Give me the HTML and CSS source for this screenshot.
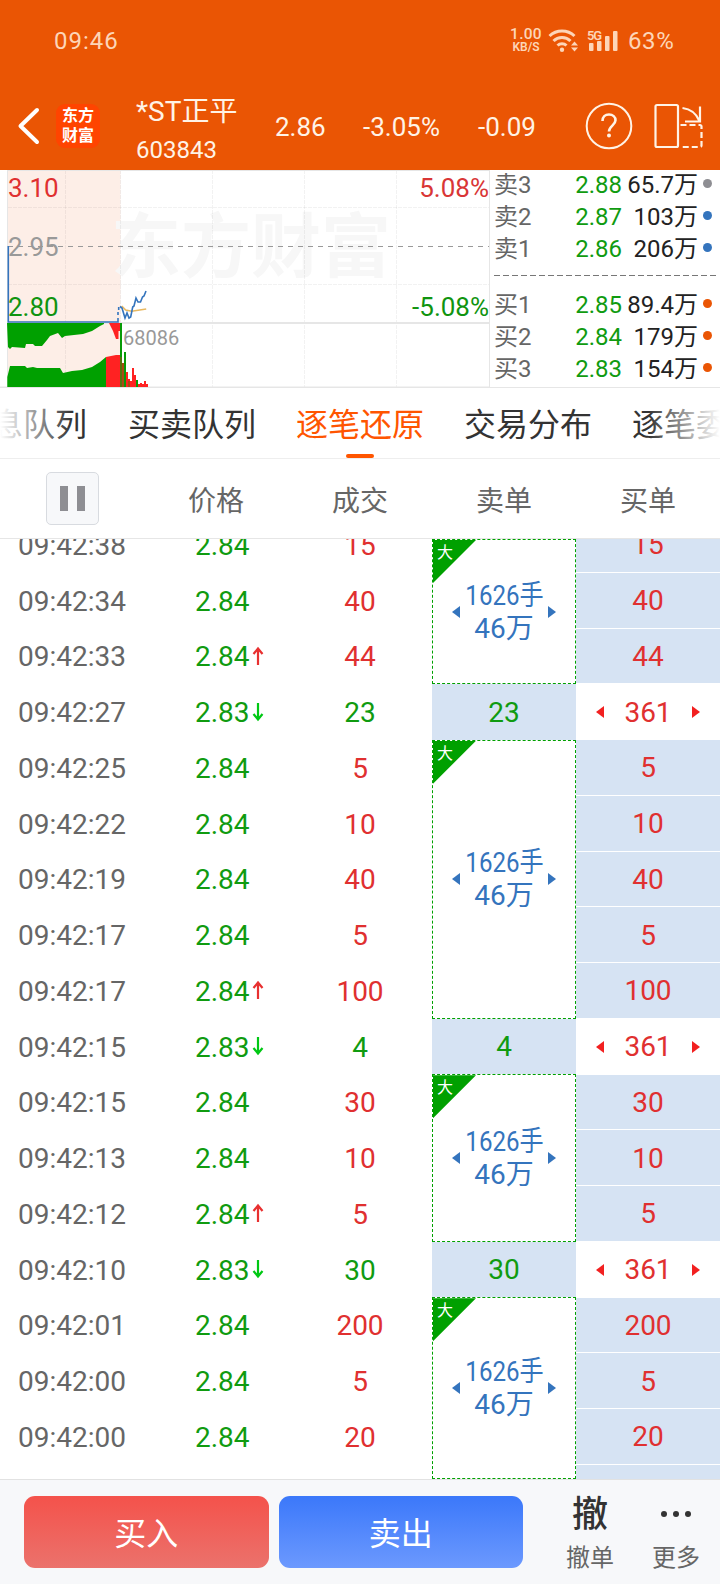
FILE: index.html
```
<!DOCTYPE html>
<html lang="zh-CN">
<head>
  <meta charset="UTF-8">
  <title>*ST正平 603843</title>
  <link rel="stylesheet" href="styles.css">
</head>
<body>
  <header class="top">
    <div class="statusbar">
      <span class="clock">09:46</span>
      <div class="speed"><b>1.00</b><span>KB/S</span></div>
      <svg class="wifi" width="32" height="26" viewBox="0 0 32 26" fill="none" stroke="#fdd5b8" stroke-width="3">
        <path d="M1.500 8a18 18 0 0 1 25 0M5.500 13a12 12 0 0 1 17 0M9.500 17.500a6.500 6.500 0 0 1 9 0"/>
        <circle cx="14" cy="21.700" r="2.200" fill="#fdd5b8" stroke="none"/>
        <path d="M23 17.500l3.500-4 3.500 4zM23 19.500l3.500 4 3.500-4z" fill="#fdd5b8" stroke="none"/>
      </svg>
      <svg class="signal" width="32" height="26" viewBox="0 0 32 26" fill="#fdd5b8">
        <text x="0" y="11.500" font-size="13" font-weight="600" textLength="15">5G</text>
        <rect x="2" y="15" width="4.500" height="8" rx="1"/>
        <rect x="10" y="13" width="4.500" height="10" rx="1"/>
        <rect x="18" y="8" width="4.500" height="15" rx="1"/>
        <rect x="26" y="3" width="4.500" height="20" rx="1"/>
      </svg>
      <span class="battery">63%</span>
    </div>
    <div class="titlebar">
      <svg class="back" width="24" height="40" viewBox="0 0 24 40" fill="none" stroke="#fff" stroke-width="4" stroke-linecap="round" stroke-linejoin="round">
        <path d="M20 4L3.500 20 20 36"/>
      </svg>
      <div class="logo">东方<br>财富</div>
      <div class="stock">
        <div class="name">*ST正平</div>
        <div class="code">603843</div>
      </div>
      <span class="quote price">2.86</span>
      <span class="quote percent">-3.05%</span>
      <span class="quote change">-0.09</span>
      <svg class="help" width="48" height="48" viewBox="0 0 48 48" fill="none" stroke="#fff3e6" stroke-width="2">
        <circle cx="24" cy="24" r="22.300"/>
        <path d="M17.500 19c0-4 2.700-6.500 6.500-6.500s6.500 2.400 6.500 5.800c0 5-6.500 5.700-6.500 11.200" stroke-width="2.600"/>
        <circle cx="24" cy="33.500" r="2" fill="#fff3e6" stroke="none"/>
      </svg>
      <svg class="rotate" width="50" height="48" viewBox="0 0 50 48" fill="none" stroke="#fff3e6" stroke-width="2.200">
        <rect x="2.500" y="3" width="22.500" height="42" rx="1.500"/>
        <path d="M29.500 6c8.500 1 14 6 17 13M47 4.500v15h-15"/>
        <path d="M27.500 23H47a1.500 1.500 0 0 1 1.500 1.500V43.500a1.500 1.500 0 0 1-1.500 1.500H27.500" stroke-dasharray="6 3"/>
      </svg>
    </div>
  </header>

  <section class="market">
    <svg class="chart" width="490" height="218" viewBox="0 0 490 218">
      <rect x="7.500" y="0" width="113" height="217" fill="#fdeee7"/>
      <text class="watermark" x="111" y="102" textLength="280">东方财富</text>
      <g class="grid">
        <path d="M65.500 0v217M120.500 0v217M212.500 0v217M304.500 0v217M396.500 0v217M8 37.500h481M8 114.500h481" stroke-dasharray="4 1"/>
        <path class="frame" d="M8 .5h481M7.500 0v217M489.500 0v217M0 217h490"/>
        <path class="frame" d="M8 153h481" stroke-width="2"/>
      </g>
      <path d="M8 76.500h481" stroke="#999" stroke-dasharray="5 5"/>
      <!-- volume before the open -->
      <path fill="#00a000" d="M7 153L8 177 10 179 12 177 25 178 26 174 33 174 35 176 42 176 47 170 50 166 58 163 62 168 65 166 83 164 92 161 100 156 104 154V153z"/>
      <path fill="#00a000" d="M7.300 217V207L10 196 25 196 27 198 33 197 37 198 60 198 63 203 72 201 82 200 92 197 100 192 106 187V217z"/>
      <path fill="#f22" d="M109 153H120V161H118.500V169H116L113 161zM106 217V187L116 185H122V217z"/>
      <!-- volume bars -->
      <path stroke="#f22" stroke-width="2" d="M127 217v-15M129 217v-8M131 217v-6M133 217v-19M135 217v-12M139 217v-3M141 217v-4M143 217v-3M145 217v-6M147 217v-3"/>
      <path stroke="#079b07" stroke-width="2" d="M121 153v64M125 217v-35M137 217v-7"/>
      <path stroke="#a84a14" stroke-width="2" d="M123 217v-24M129 217v-6"/>
      <path stroke="#a84a14" stroke-width="1" d="M121 187v30"/>
      <g fill="none" stroke-width="1.600">
        <path stroke="#e8b860" d="M121.700 136l4 4 6 1.300 14.500-2.300"/>
        <path stroke="#3474bd" d="M8.300 76v76H118v-4M118 145v-3M118.700 140v-3"/>
        <path stroke="#3474bd" d="M120 136.500l2 1.500 3 10 2-5 2 5 1.700-1 2-10 1.300-1 2-8 2 4h2.500l2-5 1.500-1 2-5"/>
      </g>
      <g class="axis">
        <text x="8" y="27" fill="#e03030">3.10</text>
        <text x="8" y="86" fill="#999">2.95</text>
        <text x="8" y="145.500" fill="#109410">2.80</text>
        <text x="489" y="27" fill="#d93636" text-anchor="end">5.08%</text>
        <text x="489" y="145.500" fill="#109410" text-anchor="end">-5.08%</text>
        <text class="vol" x="123" y="174.500" fill="#999">68086</text>
      </g>
    </svg>
    <div class="book">
      <div class="level"><span>卖3</span><em>2.88</em><b>65.7万</b><i class="dot gray"></i></div>
      <div class="level"><span>卖2</span><em>2.87</em><b>103万</b><i class="dot blue"></i></div>
      <div class="level"><span>卖1</span><em>2.86</em><b>206万</b><i class="dot blue"></i></div>
      <svg class="divider" width="222" height="24"><path d="M0 10.500h222" stroke="#777" stroke-dasharray="6 3"/></svg>
      <div class="level"><span>买1</span><em>2.85</em><b>89.4万</b><i class="dot"></i></div>
      <div class="level"><span>买2</span><em>2.84</em><b>179万</b><i class="dot"></i></div>
      <div class="level"><span>买3</span><em>2.83</em><b>154万</b><i class="dot"></i></div>
    </div>
  </section>

  <nav class="tabs">
    <span>息队列</span>
    <span>买卖队列</span>
    <span class="active">逐笔还原</span>
    <span>交易分布</span>
    <span>逐笔委托</span>
  </nav>

  <div class="thead">
    <div><button class="pause"><i></i><i></i></button></div>
    <div>价格</div>
    <div>成交</div>
    <div>卖单</div>
    <div>买单</div>
  </div>

  <main class="ticks">
    <div class="trades" id="trades"></div>
    <div class="sells" id="sells"></div>
    <div class="buys" id="buys"></div>
  </main>

  <footer class="actions">
    <button class="btn buy">买入</button>
    <button class="btn sell">卖出</button>
    <div class="tool"><strong>撤</strong><span>撤单</span></div>
    <div class="tool">
      <svg width="36" height="40" viewBox="0 0 36 40" fill="#333"><circle cx="6" cy="18" r="3"/><circle cx="18" cy="18" r="3"/><circle cx="30" cy="18" r="3"/></svg>
      <span>更多</span>
    </div>
  </footer>

  <script>
    // time, price, volume, price direction
    const rows = [
      ['09:42:38', '2.84', 15, ''],
      ['09:42:34', '2.84', 40, ''],
      ['09:42:33', '2.84', 44, 'up'],
      ['09:42:27', '2.83', 23, 'down'],
      ['09:42:25', '2.84', 5, ''],
      ['09:42:22', '2.84', 10, ''],
      ['09:42:19', '2.84', 40, ''],
      ['09:42:17', '2.84', 5, ''],
      ['09:42:17', '2.84', 100, 'up'],
      ['09:42:15', '2.83', 4, 'down'],
      ['09:42:15', '2.84', 30, ''],
      ['09:42:13', '2.84', 10, ''],
      ['09:42:12', '2.84', 5, 'up'],
      ['09:42:10', '2.83', 30, 'down'],
      ['09:42:01', '2.84', 200, ''],
      ['09:42:00', '2.84', 5, ''],
      ['09:42:00', '2.84', 20, '']
    ];
    const arrows = {
      up: '<svg class="arrow up" width="12" height="20" viewBox="0 0 12 20"><path d="M6 19V3M1.500 8L6 2.500 10.500 8"/></svg>',
      down: '<svg class="arrow down" width="12" height="20" viewBox="0 0 12 20"><path d="M6 1v16M1.500 12L6 17.500 10.500 12"/></svg>',
      '': ''
    };
    const left = '<svg class="tri" width="8" height="12" viewBox="0 0 8 12"><path d="M8 0v12L0 6z"/></svg>';
    const right = '<svg class="tri" width="8" height="12" viewBox="0 0 8 12"><path d="M0 0v12l8-6z"/></svg>';
    const order = '<div class="order"><span class="big">大</span>' + left + '<p><span class="lots">1626手</span><span>46万</span></p>' + right + '</div>';

    let trades = '', sells = '', buys = '', open = false;
    for (const [time, price, vol, dir] of rows) {
      const isSell = dir === 'down';
      trades += `<div class="row"><span class="time">${time}</span><span class="px">${price}${arrows[dir]}</span><span class="${isSell ? 'green' : 'red'}">${vol}</span></div>`;
      if (isSell) {
        sells += `<div class="cell green">${vol}</div>`;
        buys += `<div class="cell total">${left}<span>361</span>${right}</div>`;
        open = false;
      } else {
        buys += `<div class="cell red">${vol}</div>`;
        if (!open) sells += order;
        open = true;
      }
    }
    document.getElementById('trades').innerHTML = trades;
    document.getElementById('sells').innerHTML = sells;
    document.getElementById('buys').innerHTML = buys + '<div class="cell"></div>';
  </script>
</body>
</html>
```
FILE: styles.css
```
* { box-sizing: border-box; }
body { margin: 0; width: 720px; height: 1584px; overflow: hidden; background: #fff; color: #333; font-family: Roboto, "Noto Sans CJK SC", sans-serif; display: flex; flex-direction: column; }
button { border: none; padding: 0; font-family: inherit; }
svg { display: block; flex: none; }

.top { height: 170px; flex: none; background: #ea5504; color: #fff3e6; }
.statusbar { height: 81px; display: flex; align-items: center; padding-left: 54px; color: #fdd5b8; font-size: 24px; }
.clock { width: 455px; letter-spacing: 1px; }
.speed { width: 34px; display: flex; flex-direction: column; align-items: center; font-size: 12px; line-height: 12px; font-weight: 600; }
.speed b { font-size: 15.5px; line-height: 13px; font-weight: 500; letter-spacing: 0.3px; }
.wifi { margin-left: 5px; }
.signal { margin-left: 7px; }
.battery { margin-left: 9px; letter-spacing: 0.6px; }

.titlebar { height: 89px; display: flex; align-items: center; padding-left: 17px; }
.back { margin-right: 15px; }
.logo { width: 44px; height: 44px; border-radius: 9px; background: #ff4400; color: #fff; font-size: 16px; font-weight: 700; line-height: 20px; padding-top: 2px; text-align: center; }
.stock { width: 140px; margin-left: 36px; padding-top: 11px; }
.name { font-size: 28px; line-height: 38px; }
.code { font-size: 24px; line-height: 38px; }
.quote { font-size: 26px; padding-top: 2px; }
.price { width: 88px; margin-left: -1px; }
.percent { width: 115px; }
.change { width: 107px; }
.rotate { margin-left: 20px; }

.market { height: 218px; flex: none; display: flex; border-bottom: 1px solid #e6e6e6; }
.watermark { font-size: 70px; font-weight: 700; fill: #f7f7f7; }
.grid { fill: none; stroke: rgba(0, 0, 0, 0.05); }
.grid .frame { stroke: #e6e6e6; }
.axis { font-size: 26px; }
.axis .vol { font-size: 20px; }
.book { flex: 1; margin-top: -1px; padding-left: 4px; font-size: 24px; line-height: 32px; }
.level { display: flex; align-items: center; height: 32px; }
.level span { width: 72px; color: #666; }
.level em { width: 56px; text-align: right; font-style: normal; color: #109b10; }
.level b { width: 76px; text-align: right; font-weight: 400; color: #222; white-space: nowrap; }
.dot { width: 9px; height: 9px; border-radius: 50%; background: #ea5504; margin: -3px 0 0 5px; }
.dot.gray { background: #8e8e93; }
.dot.blue { background: #3474bd; }

.tabs { height: 71px; flex: none; display: flex; gap: 40px; overflow: hidden; border-bottom: 1px solid #eee; font-size: 32px; line-height: 74px; white-space: nowrap; position: relative; }
.tabs span { flex: none; height: 70px; }
.tabs span:first-child { margin-left: -9px; margin-right: 1px; }
.tabs::before, .tabs::after { content: ""; position: absolute; top: 0; width: 72px; height: 70px; z-index: 1; }
.tabs::before { left: 0; background: linear-gradient(to right, #fff, rgba(255, 255, 255, 0)); }
.tabs::after { right: 0; background: linear-gradient(to left, #fff, rgba(255, 255, 255, 0)); }
.tabs .active { color: #ff5500; position: relative; }
.active::after { content: ""; position: absolute; left: 50px; bottom: 0; width: 28px; height: 4px; border-radius: 2px; background: #ff5500; }

.thead { height: 80px; flex: none; display: grid; grid-template-columns: repeat(5, 144px); align-items: center; justify-items: center; border-bottom: 1px solid #e6e6e6; color: #666; font-size: 28px; }
.pause { width: 53px; height: 53px; margin-bottom: 1px; display: flex; align-items: center; justify-content: center; gap: 9px; border: 1px solid #d8dbe0; border-radius: 5px; background: #f7f8fa; }
.pause i { width: 8px; height: 25px; background: #8e8e93; }

.ticks { height: 940px; flex: none; display: grid; grid-template-columns: 432px 144px 144px; overflow: hidden; font-size: 28px; }
.trades, .buys { margin-top: -22px; }
.row { height: 55.75px; padding-top: 1px; display: grid; grid-template-columns: repeat(3, 144px); align-items: center; text-align: center; }
.time { color: #666; }
.px { color: #109b10; display: flex; align-items: center; padding-left: 51px; }
.arrow { fill: none; stroke-width: 2.2; margin: -2px 0 0 2px; }
.arrow.up { stroke: #e83030; }
.arrow.down { stroke: #00c814; }
.red { color: #e03030; }
.green { color: #109b10; }
.sells { display: flex; flex-direction: column; height: 940px; }
.cell { height: 55.75px; flex: none; display: flex; align-items: center; justify-content: center; background: #d6e3f3; padding-top: 1px; }
.buys .cell { border: solid #fff; border-width: 0 0 1px 0; }
.buys .total { background: #fff; color: #e03030; justify-content: space-between; padding: 1px 20px 0; }
.total .tri { fill: #f22020; }

.order { position: relative; flex: none; height: 167.25px; display: flex; align-items: center; justify-content: space-between; padding: 0 19px; border: 1px dashed #00a000; color: #3474bd; font-size: 28px; line-height: 33px; text-align: center; }
.order:first-child { height: 145px; }
.order:nth-child(3) { height: 278.75px; }
.order:last-child { height: auto; flex: 1; }
.order p { margin: 0 -6px; }
.order p span { display: block; }
.order .lots { transform: scaleX(0.86); }
.order .tri { fill: #3474bd; }
.order .big { position: absolute; left: 0; top: 0; width: 43px; height: 43px; padding: 3px 0 0 4px; background: #00a000; clip-path: polygon(0 0, 100% 0, 0 100%); color: #fff; font-size: 16px; line-height: 20px; text-align: left; }

.actions { flex: 1; display: flex; align-items: flex-start; padding: 16px 0 0 24px; background: #f7f8fa; border-top: 1px solid #e2e2e2; }
.btn { width: 244.5px; height: 72px; margin-right: 10px; border-radius: 11px; color: #fff; font-size: 32px; padding-bottom: 2px; }
.buy { background: linear-gradient(#f4524b, #eb726c); }
.sell { background: linear-gradient(#3b78fa, #6c99fe); }
.tool { width: 86px; display: flex; flex-direction: column; align-items: center; font-size: 24px; color: #666; }
.btn + .tool { margin-left: 14px; }
.tool strong { font-size: 36px; line-height: 38px; height: 40px; font-weight: 500; color: #333; }
.tool span { line-height: 36px; margin-top: 4px; }
```
